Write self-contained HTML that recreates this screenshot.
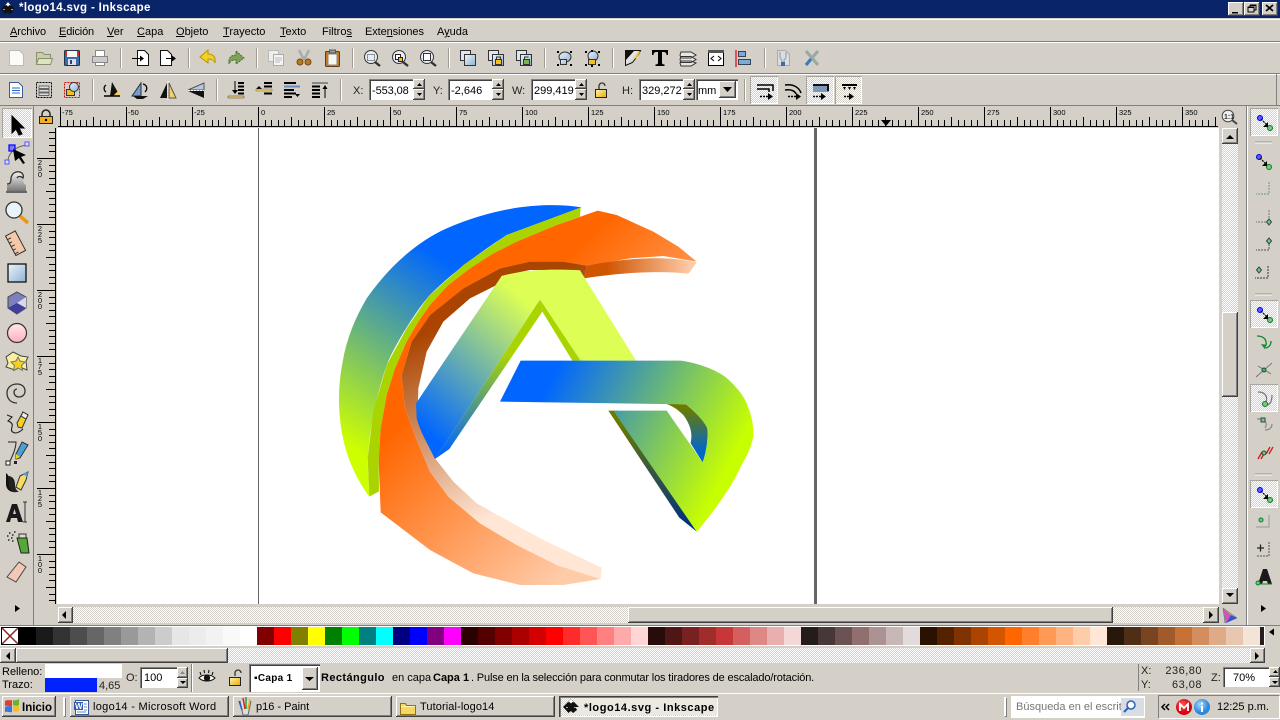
<!DOCTYPE html>
<html><head><meta charset="utf-8"><title>Inkscape</title>
<style>
html,body{margin:0;padding:0;width:1280px;height:720px;overflow:hidden;background:#d4d0c8}
body{position:relative;font:11px "Liberation Sans",sans-serif;color:#000}
.a{position:absolute}
.t{position:absolute;white-space:nowrap;font:11px/13px "Liberation Sans",sans-serif;color:#000}
.b{font-weight:bold}
.btn{position:absolute;background:#d4d0c8;box-shadow:inset -1px -1px #404040,inset 1px 1px #fff,inset -2px -2px #808080}
.sunk{position:absolute;background:#fff;box-shadow:inset 1px 1px #808080,inset 2px 2px #404040,inset -1px -1px #fff;box-sizing:border-box}
.chk{position:absolute;background:repeating-conic-gradient(#d4d0c8 0 25%,#fff 0 50%) 0 0/2px 2px}
.pr{position:absolute;background:repeating-conic-gradient(#d4d0c8 0 25%,#fff 0 50%) 0 0/2px 2px;box-shadow:inset 1px 1px #a8a59e,inset -1px -1px #fff}
.task{position:absolute;top:696px;height:21px;width:159px;background:#d4d0c8;box-shadow:inset -1px -1px #404040,inset 1px 1px #fff,inset -2px -2px #808080}
#pal{position:absolute;left:19px;top:627px;height:18px;display:flex}
#pal i{display:block;width:17px;height:18px;flex:none}
svg{position:absolute;left:0;top:0}
</style></head><body>

<div class="a" style="left:0;top:0;width:1280px;height:18px;background:#0a246a"></div>
<div class="a" style="left:0;top:18px;width:1280px;height:1px;background:#d4d0c8"></div>
<div class="a" style="left:0;top:19px;width:1280px;height:1px;background:#fff"></div>
<div class="a" style="left:0;top:41px;width:1280px;height:1px;background:#808080"></div>
<div class="a" style="left:0;top:42px;width:1280px;height:1px;background:#fff"></div>
<div class="a" style="left:0;top:73px;width:1280px;height:1px;background:#808080"></div>
<div class="a" style="left:0;top:74px;width:1280px;height:1px;background:#fff"></div>
<div class="a" style="left:0;top:105px;width:1280px;height:1px;background:#808080"></div>
<div class="a" style="left:1276px;top:74px;width:1px;height:31px;background:#808080"></div>
<div class="a" style="left:33px;top:106px;width:1px;height:519px;background:#808080"></div>
<div class="a" style="left:1246px;top:106px;width:1px;height:519px;background:#808080"></div>
<div class="a" style="left:1247px;top:106px;width:1px;height:519px;background:#fff"></div>

<div class="a" style="left:57px;top:128px;width:1162px;height:476px;background:#fff"></div>
<div class="a" style="left:258px;top:128px;width:1px;height:476px;background:#666"></div>
<div class="a" style="left:814px;top:128px;width:3px;height:476px;background:#666"></div>

<div class="pr" style="left:2px;top:108px;width:30px;height:30px"></div>
<div class="pr" style="left:1250px;top:108px;width:28px;height:28px"></div>
<div class="pr" style="left:1250px;top:300px;width:28px;height:28px"></div>
<div class="pr" style="left:1250px;top:384px;width:28px;height:28px"></div>
<div class="pr" style="left:1250px;top:480px;width:28px;height:28px"></div>
<div class="pr" style="left:750px;top:76px;width:28px;height:28px"></div>
<div class="pr" style="left:806px;top:76px;width:28px;height:28px"></div>
<div class="pr" style="left:835px;top:76px;width:27px;height:28px"></div>

<div class="chk" style="left:1222px;top:128px;width:16px;height:476px"></div>
<div class="btn" style="left:1222px;top:128px;width:16px;height:16px"></div>
<div class="btn" style="left:1222px;top:312px;width:16px;height:85px"></div>
<div class="btn" style="left:1222px;top:588px;width:16px;height:16px"></div>

<div class="chk" style="left:58px;top:607px;width:1161px;height:16px"></div>
<div class="btn" style="left:58px;top:607px;width:15px;height:16px"></div>
<div class="btn" style="left:628px;top:607px;width:485px;height:16px"></div>
<div class="btn" style="left:1203px;top:607px;width:16px;height:16px"></div>

<div class="a" style="left:0;top:625px;width:1280px;height:1px;background:#808080"></div>
<div class="a" style="left:0;top:626px;width:1265px;height:20px;background:#fff"></div>
<div class="a" style="left:1px;top:627px;width:18px;height:18px;background:#fff"></div>
<div id="pal"><i style="background:#000"></i><i style="background:#1a1a1a"></i><i style="background:#333"></i><i style="background:#4d4d4d"></i><i style="background:#666"></i><i style="background:#808080"></i><i style="background:#999"></i><i style="background:#b3b3b3"></i><i style="background:#ccc"></i><i style="background:#e6e6e6"></i><i style="background:#ececec"></i><i style="background:#f2f2f2"></i><i style="background:#f9f9f9"></i><i style="background:#fff"></i><i style="background:#800000"></i><i style="background:#f00"></i><i style="background:#808000"></i><i style="background:#ff0"></i><i style="background:#008000"></i><i style="background:#0f0"></i><i style="background:#008080"></i><i style="background:#0ff"></i><i style="background:#000080"></i><i style="background:#00f"></i><i style="background:#800080"></i><i style="background:#f0f"></i><i style="background:#2b0000"></i><i style="background:#500"></i><i style="background:#800000"></i><i style="background:#a00"></i><i style="background:#d40000"></i><i style="background:#f00"></i><i style="background:#ff2a2a"></i><i style="background:#f55"></i><i style="background:#ff8080"></i><i style="background:#faa"></i><i style="background:#ffd5d5"></i><i style="background:#280b0b"></i><i style="background:#501616"></i><i style="background:#782121"></i><i style="background:#a02c2c"></i><i style="background:#c83737"></i><i style="background:#d35f5f"></i><i style="background:#de8787"></i><i style="background:#e9afaf"></i><i style="background:#f4d7d7"></i><i style="background:#241c1c"></i><i style="background:#483737"></i><i style="background:#6c5353"></i><i style="background:#916f6f"></i><i style="background:#ac9393"></i><i style="background:#c8b7b7"></i><i style="background:#e3dbdb"></i><i style="background:#2b1100"></i><i style="background:#520"></i><i style="background:#803300"></i><i style="background:#a40"></i><i style="background:#d45500"></i><i style="background:#f60"></i><i style="background:#ff7f2a"></i><i style="background:#f95"></i><i style="background:#ffb380"></i><i style="background:#fca"></i><i style="background:#ffe6d5"></i><i style="background:#28170b"></i><i style="background:#502d16"></i><i style="background:#784421"></i><i style="background:#a05a2c"></i><i style="background:#c87137"></i><i style="background:#d38d5f"></i><i style="background:#deaa87"></i><i style="background:#e9c6af"></i><i style="background:#f4e3d7"></i><i style="background:#241f1c;width:4px"></i></div>

<div class="chk" style="left:0;top:648px;width:1265px;height:15px"></div>
<div class="btn" style="left:0;top:648px;width:16px;height:15px"></div>
<div class="btn" style="left:16px;top:648px;width:212px;height:15px"></div>
<div class="btn" style="left:1250px;top:648px;width:15px;height:15px"></div>

<div class="a" style="left:45px;top:664px;width:77px;height:14px;background:#fff"></div>
<div class="a" style="left:45px;top:678px;width:52px;height:14px;background:#0022ff"></div>
<div class="sunk" style="left:140px;top:667px;width:37px;height:21px"></div>
<div class="btn" style="left:177px;top:667px;width:11px;height:11px"></div>
<div class="btn" style="left:177px;top:678px;width:11px;height:10px"></div>
<div class="a" style="left:191px;top:664px;width:1px;height:28px;background:#808080"></div>
<div class="a" style="left:192px;top:664px;width:1px;height:28px;background:#fff"></div>
<div class="sunk" style="left:249px;top:664px;width:71px;height:28px"></div>
<div class="btn" style="left:302px;top:667px;width:16px;height:23px"></div>
<div class="a" style="left:1138px;top:664px;width:1px;height:27px;background:#808080"></div>
<div class="sunk" style="left:1223px;top:667px;width:46px;height:20px"></div>
<div class="btn" style="left:1269px;top:667px;width:11px;height:10px"></div>
<div class="btn" style="left:1269px;top:677px;width:11px;height:10px"></div>

<div class="sunk" style="left:369px;top:79px;width:45px;height:21px"></div>
<div class="btn" style="left:413px;top:79px;width:12px;height:10px"></div>
<div class="btn" style="left:413px;top:89px;width:12px;height:11px"></div>
<div class="sunk" style="left:448px;top:79px;width:45px;height:21px"></div>
<div class="btn" style="left:492px;top:79px;width:12px;height:10px"></div>
<div class="btn" style="left:492px;top:89px;width:12px;height:11px"></div>
<div class="sunk" style="left:531px;top:79px;width:45px;height:21px"></div>
<div class="btn" style="left:575px;top:79px;width:12px;height:10px"></div>
<div class="btn" style="left:575px;top:89px;width:12px;height:11px"></div>
<div class="sunk" style="left:639px;top:79px;width:45px;height:21px"></div>
<div class="btn" style="left:683px;top:79px;width:12px;height:10px"></div>
<div class="btn" style="left:683px;top:89px;width:12px;height:11px"></div>
<div class="sunk" style="left:696px;top:79px;width:42px;height:21px"></div>
<div class="btn" style="left:719px;top:81px;width:17px;height:17px"></div>

<div class="btn" style="left:1228px;top:2px;width:16px;height:14px"></div>
<div class="btn" style="left:1244px;top:2px;width:16px;height:14px"></div>
<div class="btn" style="left:1262px;top:2px;width:16px;height:14px"></div>

<div class="a" style="left:0;top:692px;width:1280px;height:1px;background:#d4d0c8"></div>
<div class="a" style="left:0;top:693px;width:1280px;height:1px;background:#fff"></div>
<div class="btn" style="left:2px;top:696px;width:54px;height:21px"></div>
<div class="a" style="left:63px;top:697px;width:2px;height:19px;background:#fff;box-shadow:1px 1px #808080"></div>
<div class="task" style="left:70px"></div>
<div class="task" style="left:233px"></div>
<div class="task" style="left:396px"></div>
<div class="task" style="left:559px;background:repeating-conic-gradient(#d4d0c8 0 25%,#fff 0 50%) 0 0/2px 2px;box-shadow:inset 1px 1px #404040,inset 2px 2px #808080,inset -1px -1px #fff"></div>
<div class="a" style="left:575px;top:698px;width:142px;height:17px;background:#ece9e1"></div>
<div class="a" style="left:1004px;top:697px;width:2px;height:19px;background:#fff;box-shadow:1px 1px #808080"></div>
<div class="a" style="left:1011px;top:696px;width:134px;height:22px;background:#fff;box-sizing:border-box"></div>
<div class="a" style="left:1121px;top:698px;width:23px;height:18px;background:#d8dde4"></div>
<div class="a" style="left:1158px;top:695px;width:122px;height:24px;box-sizing:border-box;border:1px solid;border-color:#808080 #fff #fff #808080"></div>

<svg width="1280" height="720" viewBox="0 0 1280 720" xmlns="http://www.w3.org/2000/svg">
<defs>
<pattern id="rt" x="60" y="0" width="66" height="720" patternUnits="userSpaceOnUse"><path shape-rendering="crispEdges" stroke="#000" fill="none" d="M.5 107V126M7.5 120V126M13.5 120V126M20.5 120V126M26.5 120V126M33.5 117V126M40.5 120V126M46.5 120V126M53.5 120V126M59.5 120V126"/></pattern>
<pattern id="rl" x="0" y="158" width="720" height="66" patternUnits="userSpaceOnUse"><path shape-rendering="crispEdges" stroke="#000" fill="none" d="M37 .5H56M49 7.5H56M49 13.5H56M49 20.5H56M49 26.5H56M46 33.5H56M49 40.5H56M49 46.5H56M49 53.5H56M49 59.5H56"/></pattern>
<linearGradient id="gBlueC" gradientUnits="userSpaceOnUse" x1="420" y1="250" x2="70" y2="760"><stop offset="0" stop-color="#06f"/><stop offset="1" stop-color="#ceff00"/></linearGradient>
<linearGradient id="gOr" gradientUnits="userSpaceOnUse" x1="450" y1="450" x2="925" y2="925"><stop offset="0" stop-color="#f60"/><stop offset="1" stop-color="#fca"/></linearGradient>
<linearGradient id="gRib" gradientUnits="userSpaceOnUse" x1="230" y1="440" x2="480" y2="970"><stop offset="0" stop-color="#a40"/><stop offset="1" stop-color="#ffe6d5"/></linearGradient>
<linearGradient id="gArm" gradientUnits="userSpaceOnUse" x1="830" y1="0" x2="1085" y2="0"><stop offset="0" stop-color="#d05500"/><stop offset="1" stop-color="#fca"/></linearGradient>
<linearGradient id="gA" gradientUnits="userSpaceOnUse" x1="630" y1="360" x2="300" y2="720"><stop offset="0" stop-color="#df5"/><stop offset="1" stop-color="#06f"/></linearGradient>
<linearGradient id="gAs" gradientUnits="userSpaceOnUse" x1="0" y1="480" x2="0" y2="770"><stop offset="0" stop-color="#aad400"/><stop offset="1" stop-color="#06f"/></linearGradient>
<linearGradient id="gG" gradientUnits="userSpaceOnUse" x1="660" y1="560" x2="1190" y2="830"><stop offset="0" stop-color="#06f"/><stop offset="1" stop-color="#c8ff00"/></linearGradient>
<linearGradient id="gIn" gradientUnits="userSpaceOnUse" x1="0" y1="640" x2="0" y2="770"><stop offset="0" stop-color="#6b7b00"/><stop offset="1" stop-color="#06c"/></linearGradient>
<linearGradient id="gLo" gradientUnits="userSpaceOnUse" x1="0" y1="680" x2="0" y2="990"><stop offset="0" stop-color="#6b7b00"/><stop offset="1" stop-color="#003080"/></linearGradient>
<linearGradient id="gs" x1="0" y1="0" x2="1" y2="1"><stop offset="0" stop-color="#fff"/><stop offset="1" stop-color="#bbb"/></linearGradient>
<linearGradient id="gblu" x1="0" y1="0" x2="1" y2="1"><stop offset="0" stop-color="#eef4fa"/><stop offset="1" stop-color="#8fb2d6"/></linearGradient>
<linearGradient id="gyl" x1="0" y1="0" x2="1" y2="1"><stop offset="0" stop-color="#fff7b0"/><stop offset="1" stop-color="#e8a800"/></linearGradient>
<linearGradient id="gpk" x1="0" y1="0" x2="0" y2="1"><stop offset="0" stop-color="#ffe8ec"/><stop offset="1" stop-color="#ffb0bc"/></linearGradient>
<linearGradient id="ggr" x1="0" y1="0" x2="0" y2="1"><stop offset="0" stop-color="#eee"/><stop offset="1" stop-color="#777"/></linearGradient>
<radialGradient id="grd" cx=".4" cy=".35"><stop offset="0" stop-color="#ff5a5a"/><stop offset="1" stop-color="#d80010"/></radialGradient>
<radialGradient id="gbl" cx=".4" cy=".35"><stop offset="0" stop-color="#a8d8ff"/><stop offset="1" stop-color="#2a88dd"/></radialGradient>
</defs>

<!-- rulers -->
<rect x="58" y="107" width="1160" height="19" fill="url(#rt)"/>
<rect x="58" y="126" width="1160" height="1" fill="#000"/>
<rect x="37" y="128" width="19" height="476" fill="url(#rl)"/>
<rect x="55" y="128" width="1" height="476" fill="#000"/>
<g font-family="Liberation Sans" font-size="7.500" fill="#000">
<text x="62" y="115">-75</text><text x="128" y="115">-50</text><text x="194" y="115">-25</text><text x="261" y="115">0</text><text x="327" y="115">25</text><text x="393" y="115">50</text><text x="459" y="115">75</text><text x="525" y="115">100</text><text x="591" y="115">125</text><text x="657" y="115">150</text><text x="723" y="115">175</text><text x="789" y="115">200</text><text x="855" y="115">225</text><text x="921" y="115">250</text><text x="987" y="115">275</text><text x="1053" y="115">300</text><text x="1119" y="115">325</text><text x="1185" y="115">350</text>
<g text-anchor="middle">
<text x="40" y="165">2</text><text x="40" y="171">5</text><text x="40" y="177">0</text>
<text x="40" y="231">2</text><text x="40" y="237">2</text><text x="40" y="243">5</text>
<text x="40" y="297">2</text><text x="40" y="303">0</text><text x="40" y="309">0</text>
<text x="40" y="363">1</text><text x="40" y="369">7</text><text x="40" y="375">5</text>
<text x="40" y="429">1</text><text x="40" y="435">5</text><text x="40" y="441">0</text>
<text x="40" y="495">1</text><text x="40" y="501">2</text><text x="40" y="507">5</text>
<text x="40" y="561">1</text><text x="40" y="567">0</text><text x="40" y="573">0</text>
</g></g>
<path d="M881 120h10l-5 6z" fill="#000"/>

<!-- logo -->
<g transform="translate(330 195) scale(.33333)">
<path fill="url(#gBlueC)" d="M755 37C640 20 500 35 350 100C250 145 170 225 110 310C75 370 50 430 38 500C25 570 25 620 30 670C38 760 70 840 118 905L113 800C118 700 140 600 170 510C195 450 250 360 295 305C340 260 400 205 530 120Z"/>
<path fill="#aad400" d="M752 37L530 120L400 210L295 305L230 400L170 510L130 650L113 790L118 905L147 889L146 800L152 700L170 600L195 520L230 440L265 380L300 330L355 270L420 220L490 175L560 140L680 90L750 65Z"/>
<path fill="url(#gOr)" d="M803 47L860 60L970 110L1045 155L1100 200L1000 183L900 190L770 212L700 200L600 200L510 220L400 280L300 360L245 440L215 540L225 640L262 740L300 830L355 905L450 985L560 1050L680 1110L812 1152L700 1170L570 1170L430 1135L300 1065L152 952L146 800L152 700L170 600L195 520L230 440L265 380L300 330L355 270L420 220L490 175L560 140L680 90Z"/>
<path fill="url(#gRib)" d="M770 212L700 200L600 200L510 220L400 280L300 360L245 440L215 540L225 640L262 740L300 830L355 905L450 985L560 1050L680 1110L812 1152L815 1118L640 1035L530 975L440 925L370 860L315 790L262 670L265 580L290 470L340 380L420 310L500 270L515 243L600 225L750 226L763 250Z"/>
<path fill="url(#gArm)" d="M770 212C880 190 1000 180 1100 202L1076 236C980 225 860 235 763 250Z"/>
<path fill="url(#gAs)" d="M630 313L315 792L358 762L637 350Z"/>
<path fill="#aad400" d="M630 313L637 350L727 497H752Z"/>
<path fill="url(#gA)" d="M515 243C590 222 680 222 750 226L918 497L752 497L630 313L315 792C295 750 270 710 260 670L258 625Z"/>
<path fill="url(#gLo)" d="M835 647H860L1100 1010L1048 968Z"/>
<path fill="url(#gIn)" d="M1005 625L1068 628C1095 650 1125 680 1132 700C1135 735 1128 775 1118 802L1082 745C1088 715 1082 690 1060 660C1040 640 1025 632 1005 625Z"/>
<path fill="url(#gG)" d="M572 497H1052C1095 503 1150 520 1185 545C1215 570 1240 600 1250 625C1265 660 1272 695 1270 725C1262 760 1250 785 1240 800C1220 840 1205 870 1190 890C1165 930 1130 975 1100 1010L850 647H1010L1118 802C1128 775 1135 735 1132 700C1125 680 1095 650 1068 628L510 620Z"/>
</g>

<!-- title icon + window buttons -->
<g id="ink"><path d="M8 2L15 9H12L13 12L9 14L8 12L5 14L2 10L1 9Z" fill="#111"/><path d="M8 2L11 5.5L9.5 5L8 6.5L6.5 5L5 5.5Z" fill="#fff"/><path d="M3 9.5h2M11 9.500h2" stroke="#999"/></g>
<path d="M1232 12h6v1.500h-6z" fill="#000"/>
<path d="M1250 5h6v5h-2M1250 5v2M1248 7h6v5h-6z" fill="none" stroke="#000" stroke-width="1"/><path d="M1250 4.500h6.500v1.500h-6.500zM1248 6.500h6v1.500h-6z"/>
<path d="M1266 5l7 6M1273 5l-7 6" stroke="#000" stroke-width="1.700"/>

<!-- toolbar 1 -->
<g stroke-width="1">
<path d="M9.500 50.500h10l4 4v11h-14z" fill="#fbfbf8" stroke="#bbb"/>
<path d="M36.500 52.500h6l2 2h6v10h-14z" fill="#c9cfa4" stroke="#8b9070"/><path d="M38.500 58.500h14l-2 6h-14z" fill="#dde2bf" stroke="#8b9070"/>
<rect x="64.500" y="50.500" width="15" height="15" rx="1" fill="#3b6ea8" stroke="#234"/><rect x="65" y="51" width="14" height="4" fill="#d8262c"/><rect x="67" y="51" width="10" height="6" fill="#f6f6f2"/><rect x="68" y="59" width="8" height="6" fill="#dde"/><rect x="70" y="60" width="2" height="4" fill="#346"/>
<path d="M95.500 50.500h9v6h-9z" fill="#fff" stroke="#888"/><path d="M92.500 56.500h15v6h-15z" fill="#ccc" stroke="#888"/><path d="M95.500 62.500h9v3h-9z" fill="#fff" stroke="#888"/>
<path d="M137.500 50.500h7l4 4v11h-11z" fill="#fff" stroke="#111"/><path d="M132 58.500h10" stroke="#000"/><path d="M140 55.500l4 3-4 3z"/>
<path d="M160.500 50.500h7l4 4v11h-11z" fill="#fff" stroke="#111"/><path d="M166 58.500h8" stroke="#000"/><path d="M172 55.500l4 3-4 3z"/>
<path d="M208 50l-8 7 8 6v-4c4 0 6 1 7 4 1-6-2-9-7-9z" fill="#f4d020" stroke="#b8960a"/>
<path d="M236 51l8 7-8 6v-4c-4 0-6 1-7 4-1-6 2-9 7-9z" fill="#7da25a" stroke="#4d6b35" stroke-dasharray="2 1"/>
<path d="M268.500 50.500h10v11h-10z" fill="#eee" stroke="#bbb"/><path d="M273.500 54.500h10v11h-10z" fill="#f5f5f5" stroke="#aaa"/><path d="M275 58h7M275 60h7M275 62h5" stroke="#bbb"/>
<path d="M299 50l5 10M309 50l-5 10" stroke="#aaa" stroke-width="2.500"/><circle cx="300" cy="62" r="3" fill="#b87a1e" stroke="#7a4a10"/><circle cx="308" cy="62" r="3" fill="#b87a1e" stroke="#7a4a10"/>
<rect x="325.500" y="51.500" width="14" height="15" rx="1" fill="#c07a2a" stroke="#6a3a10"/><rect x="328" y="54" width="9" height="11" fill="#f7f7f2" stroke="#888"/><rect x="329.500" y="50" width="6" height="3" fill="#999" stroke="#555"/>
<g fill="#fff" stroke="#333"><circle cx="371" cy="57" r="6.500" fill="#e7eef5"/><path d="M375 62l5 4" stroke-width="2.400"/><circle cx="399" cy="57" r="6.500" fill="#e7eef5"/><path d="M403 62l5 4" stroke-width="2.400"/><circle cx="427" cy="57" r="6.500" fill="#e7eef5"/><path d="M431 62l5 4" stroke-width="2.400"/></g>
<rect x="367.500" y="54.500" width="7" height="6" fill="none" stroke="#333" stroke-dasharray="1 1"/><rect x="395.500" y="54.500" width="5" height="5" fill="#fff" stroke="#222"/><rect x="398.500" y="57.500" width="4" height="4" fill="#f4c020" stroke="#222"/><rect x="423.500" y="53.500" width="7" height="7" fill="#fff" stroke="#333"/>
</g>
<g stroke="#333">
<rect x="460.500" y="50.500" width="10" height="10" fill="#dde7f1"/><rect x="464.500" y="54.500" width="11" height="11" fill="url(#gblu)"/>
<rect x="488.500" y="50.500" width="10" height="10" fill="#dde7f1"/><rect x="492.500" y="54.500" width="11" height="11" fill="url(#gblu)"/><rect x="495.500" y="59.500" width="6" height="5" fill="#f4c020"/><path d="M496.500 59v-2h4v2" fill="none"/>
<rect x="516.500" y="50.500" width="10" height="10" fill="#dde7f1"/><rect x="520.500" y="54.500" width="11" height="11" fill="url(#gblu)"/><rect x="523.500" y="59.500" width="6" height="5" fill="#7ab648"/><path d="M524.500 59v-2h4" fill="none"/>
<ellipse cx="565" cy="57" rx="6" ry="5" fill="url(#gblu)"/><rect x="560.500" y="59.500" width="6" height="5" fill="url(#gblu)"/>
<ellipse cx="593" cy="56" rx="5" ry="5" fill="url(#gblu)"/><rect x="588.500" y="59.500" width="7" height="5" fill="#f4c020"/>
</g>
<path d="M557 51h2v2h-2zM570 51h2v2h-2zM557 64h2v2h-2zM570 64h2v2h-2zM585 51h2v2h-2zM598 51h2v2h-2zM585 64h2v2h-2zM598 64h2v2h-2zM591 50h2v2h-2zM591 65h2v2h-2z"/>
<path d="M625.500 50.500h15l-2 4-6 8-7 3z" fill="url(#gs)" stroke="#111"/><path d="M625 66V51h9l-9 10z" fill="#111"/><path d="M634 59l5-8 1 1-3 6z" fill="#f4c020"/>
<path d="M652 50h16v5h-1.500c0-2-1-3-3-3h-1.500v11c0 1 1 1.500 2.500 1.500V66h-9v-1.500c1.500 0 2.500-.5 2.500-1.500V52h-1.500c-2 0-3 1-3 3H652z" fill="#000"/>
<path d="M681 52h10l5 3-5 3h-10l-1-3z M681 56.500h10l5 3-5 3h-10l-1-3z M681 61h10l5 2-5 3h-10l-1-3z" fill="#e8e8e2" stroke="#333"/>
<rect x="708.500" y="50.500" width="15" height="15" fill="#fff" stroke="#000"/><rect x="708" y="50" width="16" height="3" fill="#555"/><path d="M714 56l-3 2.500 3 2.500M718 56l3 2.500-3 2.500" fill="none" stroke="#000"/>
<path d="M736 50v17" stroke="#e01010" stroke-width="1.300"/><rect x="738.500" y="51.500" width="7" height="5" fill="#7eaad8" stroke="#345"/><rect x="738.500" y="59.500" width="12" height="5" fill="#7eaad8" stroke="#345"/>
<path d="M777.500 50.500h8l4 4v11h-12z" fill="#ddd" stroke="#aaa"/><path d="M780 52v5c0 2 2 2 2 4v3h2v-3c0-2 2-2 2-4v-5" fill="none" stroke="#8aa" stroke-width="1.200"/><rect x="781" y="62" width="4" height="4" fill="#3a6ab0"/>
<path d="M806 51l12 14M818 51l-12 14" stroke="#9aa8a4" stroke-width="3"/><path d="M806 65l5-6" stroke="#3a78c0" stroke-width="3"/>
<!-- separators -->
<path d="M120.500 48v20M188.500 48v20M256.500 48v20M352.500 48v20M448.500 48v20M544.500 48v20M612.500 48v20M764.500 48v20M92.500 79v22M216.500 79v22M340.500 79v22M744.500 79v22" stroke="#a09c94"/>
<path d="M121.500 48v20M189.500 48v20M257.500 48v20M353.500 48v20M449.500 48v20M545.500 48v20M613.500 48v20M765.500 48v20M93.500 79v22M217.500 79v22M341.500 79v22M745.500 79v22" stroke="#fff"/>

<!-- toolbar 2 -->
<path d="M9.500 82.500h9l4 4v11h-13z" fill="#fff" stroke="#3a5a9a"/><path d="M12 88h8M12 90.500h8M12 93h8" stroke="#2a62c8"/>
<rect x="36.500" y="82.500" width="15" height="15" fill="none" stroke="#000" stroke-dasharray="2 1"/><path d="M39 86h10v2.500H39zM39 89.500h10V92H39zM39 93h10v2.500H39z" fill="#ddd" stroke="#444" stroke-width=".7"/>
<rect x="64.500" y="82.500" width="15" height="15" fill="none" stroke="#d01010" stroke-dasharray="2 1"/><rect x="66.500" y="89.500" width="8" height="6" fill="#f4c020" stroke="#333"/><circle cx="74" cy="87" r="4.500" fill="url(#gblu)" stroke="#333"/>
<path d="M110 96L112 82l8 14z" fill="#111"/><path d="M113 96l7-7v7z" fill="#f4d060"/><path d="M104 96h16" stroke="#000" stroke-width="1.500"/><path d="M106 85c-3 2-2 6 0 7" fill="none" stroke="#000" stroke-width="1.300"/>
<path d="M132 96l9-13v13z" fill="#7a9ac8" stroke="#234"/><path d="M133 96h15l-5 3h-6z" fill="#111"/><path d="M143 84c4 1 5 5 2 8" fill="none" stroke="#000" stroke-width="1.300"/>
<path d="M167 83l-7 15h7z" fill="#111"/><path d="M169 83l7 15h-7z" fill="#f4d060" stroke="#555"/><path d="M168 81v19" stroke="#fff" stroke-dasharray="2 1"/>
<path d="M204 83l-16 7h16z" fill="#b8c8e0" stroke="#555"/><path d="M204 91l-16 0 16 7z" fill="#111"/><path d="M188 90.500h16" stroke="#fff" stroke-dasharray="2 1"/>
<path d="M235 81v12" stroke="#000"/><path d="M232 90h6l-3 4z"/><rect x="228" y="96" width="16" height="2" fill="#f4d060" stroke="#555" stroke-width=".6"/>
<path d="M238 82h6v2h-6zM238 85.500h6v2h-6zM238 89h6v2h-6zM238 92.500h6v2h-6z"/>
<path d="M256 89h6l-3-3zM264 82h8v2h-8zM264 85.500h8v2h-8zM264 92.500h8v2h-8z"/><rect x="256" y="89" width="16" height="2" fill="#f4d060" stroke="#555" stroke-width=".4"/>
<path d="M284 82h12v2h-12zM284 85.500h16v2h-16zM284 89h10v2h-10zM284 92.500h12v2h-12zM284 96h8v2h-8z"/><path d="M284 85.500h16v2h-16z" fill="#6a8ac0"/><path d="M295 94h5l-2.500 3z"/>
<rect x="312" y="82" width="16" height="2" fill="#888"/><path d="M312 85.500h8v2h-8zM312 89h8v2h-8zM312 92.500h8v2h-8zM312 96h8v2h-8z"/><path d="M325 87v11" stroke="#000"/><path d="M322.500 89l2.500-4 2.500 4z"/>
<path d="M600 88v-3a3 3 0 0 1 6 0" fill="none" stroke="#333" stroke-width="1.300" transform="translate(-1 1)"/><rect x="595.500" y="89.500" width="11" height="8" fill="url(#gyl)" stroke="#222"/>
<!-- transform affect icons -->
<g stroke="#000" stroke-width="1.500" fill="none"><path d="M757 85h16v6M757 89h12v3"/><path d="M760 96.500h9" stroke-dasharray="2 1"/>
<path d="M785 85c8-1 14 2 16 8M785 90c6-1 10 1 11 4"/><path d="M788 96.500h9" stroke-dasharray="2 1"/>
<path d="M813 96.500h9" stroke-dasharray="2 1"/>
<path d="M842 85h14" /><path d="M844 96.500h8" stroke-dasharray="2 1"/></g>
<path d="M768 93l5 3.500-5 3.500zM796 93l5 3.500-5 3.500zM821 93l5 3.500-5 3.500zM849 93l5 3.500-5 3.500z"/>
<rect x="813" y="84" width="16" height="8" fill="#7d97b8"/><path d="M813 84h16v7h-2v-5h-14z" fill="#111"/><path d="M842 84h15v2h-15z"/><path d="M843 87h3l-1.500 3zM848 87h3l-1.500 3zM853 87h3l-1.500 3z"/>
<!-- spinner arrows -->
<g fill="#000"><path d="M417 86l2.500-3 2.500 3zM417 93l2.500 3 2.500-3zM496 86l2.500-3 2.500 3zM496 93l2.500 3 2.500-3zM579 86l2.500-3 2.500 3zM579 93l2.500 3 2.500-3zM687 86l2.500-3 2.500 3zM687 93l2.500 3 2.500-3z"/><path d="M723 87h9l-4.500 5z"/></g>

<!-- left toolbar -->
<path d="M12 116v17l4-4 3 6 3-1-3-6h5z" fill="#000" stroke="#000"/>
<path d="M8 160c1-8 9-14 19-15" fill="none" stroke="#666"/><rect x="9" y="145" width="6" height="6" fill="#7a7aff" stroke="#00f" stroke-width="1.200"/><rect x="25" y="142" width="4" height="4" fill="#dde" stroke="#55f"/><rect x="5" y="160" width="4" height="4" fill="#dde" stroke="#55f"/><path d="M13 149l13 6-5 2 4 6-2 1-4-6-4 3z" fill="#000"/>
<path d="M7 185v6h19v-6c-3-1-3-5-3-7 0-4-3-6-7-5-4 1-6 4-6 8 0 2-1 4-3 4z" fill="url(#ggr)"/><path d="M7 184c4 0 4-3 4-6 1-5 5-7 9-6 3 1 4 4 3 6-2-2-5-2-6 0" fill="none" stroke="#333" stroke-width="1.300"/><rect x="6" y="191" width="21" height="2" fill="#666"/>
<circle cx="14" cy="210" r="8" fill="#eaf2fa" stroke="#333" stroke-width="1.300"/><path d="M20 216l8 7" stroke="#e89a10" stroke-width="3.500"/>
<g transform="rotate(-28 16 243)"><rect x="10" y="232" width="11" height="22" fill="#f4c8a8" stroke="#333"/><path d="M10 236h4M10 240h3M10 244h4M10 248h3M10 252h4" stroke="#333"/></g>
<rect x="8" y="264" width="18" height="18" fill="url(#gblu)" stroke="#111" stroke-width="1.300"/>
<path d="M17 292l9 5v11l-9 6-9-6v-11z" fill="#7c80bc" stroke="#444"/><path d="M17 303l9-6v11l-9 6z" fill="#d6d8ee"/><path d="M17 303l-9 5 9 6 9-6z" fill="#3f4198"/>
<circle cx="17" cy="333" r="9.500" fill="url(#gpk)" stroke="#333" stroke-width="1.200"/>
<path d="M13 352l-7 5 2 6-2 4 9 3 5-3 7 3-1-9 2-4-7-1z" fill="#f8f0a0" stroke="#444"/><path d="M18 357l2 4 5 1-3.500 3.500 1 5-4.500-2.500-4.500 2.500 1-5-3.500-3.500 5-1z" fill="#f4d020" stroke="#777"/>
<path d="M17 403c-7 0-10-5-10-10 0-6 5-9 10-9 5 0 8 3 8 7 0 4-3 6-6 6-3 0-5-2-5-5 0-2 2-3 3-3" fill="none" stroke="#333" stroke-width="1.300"/>
<path d="M7 415l5 2-4 4c3 1 5 3 4 6-1 3-1 5 3 6 3 0 6-2 8-4" fill="none" stroke="#222" stroke-width="1.100"/><path d="M23 412l5 3-6 13-4-1-1-4z" fill="#f4d020" stroke="#333"/><path d="M23 412l5 3-2 4-5-3z" fill="#eee" stroke="#333"/>
<path d="M8 442h8c0 5-3 13-6 19" fill="none" stroke="#222"/><rect x="6" y="461" width="4" height="4" fill="#fff" stroke="#222"/><rect x="14" y="461" width="3" height="3" fill="#222"/><path d="M22 442l6 3-8 13-4 1v-5z" fill="#4aa0d8" stroke="#333"/><path d="M16 454l4 3-4 2z" fill="#f4d020"/>
<path d="M6 473c4 3 3 7 3 10 0 6 3 8 8 9-6 1-11-2-11-8 0-4 0-7 0-11z" fill="#111"/><path d="M8 476c5 0 7 4 7 8s1 6 4 8h-6c-3-2-4-5-4-8z" fill="#222"/><path d="M20 476l8-4-2 8-5 10-5-3z" fill="#f6dc60" stroke="#333"/><path d="M23 474l5-2-1 5z" fill="#4aa0d8"/>
<path d="M6 522l6-18h5l6 18h-5l-1-4h-6l-1 4z M13 514h3l-1.500-5z" fill="#1a1a1a" fill-rule="evenodd"/><path d="M25 502v20M23 502h4M23 522h4" stroke="#333" fill="none"/>
<path d="M7 536h1.500M9 533h1.500M12 535h1.500M8 540h1.500M11 538h1.500M14 532h1.500M12 541h1.500" stroke="#222" stroke-width="1.500"/><rect x="19" y="534" width="7" height="4" fill="#d8d8d0" stroke="#333"/><path d="M17 538h10l2 15H21z" fill="#55a838" stroke="#222"/>
<path d="M7 577l12-15 7 5-10 15-9-5z" fill="#f4c8b4" stroke="#444"/>
<path d="M15 605l5 3.500-5 3.500z"/>

<!-- scrollbar arrows -->
<path d="M1226 139l4-4 4 4z M1226 593h8l-4 4z M62 615l4-4v8z M1209 611l4 4-4 4z M6 656l4-4v8z M1255 652l4 4-4 4z M1269 632l5-3.500v7z"/>
<!-- 1:1 zoom -->
<circle cx="1228" cy="116" r="5.800" fill="#eee" stroke="#444"/><path d="M1232 120l5 4" stroke="#444" stroke-width="2"/>
<text x="1224" y="119" font-size="7" font-family="Liberation Sans" font-weight="bold" fill="#333">1:1</text>
<!-- color wheel -->
<path d="M1223 608l14 10-12 5z" fill="#8ad070" stroke="#555" stroke-width=".5"/><path d="M1223 608l3 15 5-8z" fill="#d050c8"/><path d="M1226 623l11-5-6-3z" fill="#3a50d8"/><path d="M1223 608l8 7 2 1z" fill="#e0c040"/>

<!-- right toolbar -->
<g id="snap"><circle cx="1260" cy="118" r="2.500" fill="#5a5aff" stroke="#00d"/><circle cx="1270" cy="128" r="2.500" fill="#7ac87a" stroke="#0a7a2a"/><path d="M1261 119l7 7" stroke="#000" stroke-width="1.200" stroke-dasharray="2 1"/><path d="M1268 122v5h-5z"/></g>
<path d="M1255 142h17" stroke="#999"/><path d="M1255 143h17" stroke="#fff"/>
<circle cx="1259" cy="157" r="2.500" fill="#5a5aff" stroke="#00d"/><circle cx="1269" cy="167" r="2.500" fill="#7ac87a" stroke="#0a7a2a"/><path d="M1260 158l7 7" stroke="#000" stroke-width="1.200" stroke-dasharray="2 1"/><path d="M1267 161v5h-5z"/>
<path d="M1269 182v12h-13" fill="none" stroke="#6a9a7a" stroke-dasharray="2 1"/>
<path d="M1269 210v12h-13" fill="none" stroke="#777" stroke-dasharray="2 1"/><path d="M1269 219l2.500 3-2.500 3-2.500-3z" fill="#7ac87a" stroke="#345"/>
<path d="M1269 238v12h-13" fill="none" stroke="#555" stroke-dasharray="2 1"/><path d="M1269 238l2.500 3-2.500 3-2.500-3z" fill="#7ac87a" stroke="#345"/>
<path d="M1268 266v12h-13" fill="none" stroke="#333" stroke-dasharray="2 1"/><path d="M1259 267l2.500 3-2.500 3-2.500-3z" fill="#7ac87a" stroke="#345"/>
<path d="M1255 294h17" stroke="#999"/><path d="M1255 295h17" stroke="#fff"/>
<circle cx="1260" cy="310" r="2.500" fill="#5a5aff" stroke="#00d"/><circle cx="1270" cy="320" r="2.500" fill="#7ac87a" stroke="#0a7a2a"/><path d="M1261 311l7 7" stroke="#000" stroke-width="1.200" stroke-dasharray="2 1"/><path d="M1268 314v5h-5z"/>
<path d="M1257 336c6 0 10 3 9 9M1271 341c0 5-3 7-7 7" fill="none" stroke="#0a8a2a" stroke-width="1.300"/><path d="M1261 344l3 4 3-3" fill="#0a8a2a"/>
<path d="M1256 377l16-14M1258 366l13 8" stroke="#777"/><circle cx="1264" cy="370" r="2" fill="#5aaa6a" stroke="#0a5a2a"/>
<path d="M1258 392c7 0 10 4 8 10M1272 395c0 7-2 10-6 10" fill="none" stroke="#777" stroke-width="1.200"/><circle cx="1265" cy="404" r="2.500" fill="#7ac87a" stroke="#0a7a2a"/>
<path d="M1257 419h6M1262 420c5 1 5 5 3 8M1272 424c0 4-3 6-7 6" fill="none" stroke="#888" stroke-width="1.200"/><rect x="1261" y="418" width="4" height="4" fill="#7ac87a" stroke="#345"/>
<path d="M1258 459l4-7M1261 459l4-7M1266 454l4-7M1269 454l4-7" stroke="#d01818" stroke-width="1.300"/><circle cx="1264" cy="453" r="2" fill="#7ac87a" stroke="#0a5a2a"/>
<path d="M1255 474h17" stroke="#999"/><path d="M1255 475h17" stroke="#fff"/>
<circle cx="1260" cy="490" r="2.500" fill="#5a5aff" stroke="#00d"/><circle cx="1270" cy="500" r="2.500" fill="#7ac87a" stroke="#0a7a2a"/><path d="M1261 491l7 7" stroke="#000" stroke-width="1.200" stroke-dasharray="2 1"/><path d="M1268 494v5h-5z"/>
<path d="M1269 515v12h-13" fill="none" stroke="#999"/><circle cx="1261" cy="520" r="2" fill="#7ac87a" stroke="#0a7a2a"/>
<path d="M1269 542v14h-13" fill="none" stroke="#555" stroke-dasharray="2 1"/><path d="M1257 548h7M1260.500 544.500v7" stroke="#222" stroke-width="1.300"/>
<path d="M1258 584l5-15h4l5 15h-4l-1-3h-4l-1 3z" fill="#1a1a1a"/><path d="M1258 584h14" stroke="#0a8a2a"/><circle cx="1258" cy="583" r="2" fill="#7ac87a" stroke="#0a7a2a"/>
<path d="M1261 605l5 3.500-5 3.500z"/>

<!-- palette X -->
<path d="M2 628l16 16M18 628l-16 16" stroke="#8a2a2a" stroke-width="1.500"/><rect x="1.500" y="627.500" width="17" height="17" fill="none" stroke="#000"/>

<!-- status icons -->
<path d="M180 674l2.500-3 2.500 3z" fill="#888"/><path d="M180 681h6l-3 3z"/>
<path d="M199 678c3-4 12-4 16 0-4 4-12 4-16 0z" fill="#fff" stroke="#111"/><circle cx="207" cy="678" r="3.200" fill="#111"/><path d="M200 672l1 3M204 670l.5 3M209 670l-.5 3M213 672l-1 3" stroke="#111" stroke-width="1.100"/>
<path d="M235 676v-3a3 3 0 0 1 6 0" fill="none" stroke="#333" stroke-width="1.300"/><rect x="229.500" y="677.500" width="11" height="8" fill="url(#gyl)" stroke="#222"/>
<path d="M305 677h9l-4.500 4z"/>
<path d="M1273 673l2.500-3 2.500 3zM1272 681h6l-3 3z"/>

<!-- lock on ruler -->
<path d="M42 117v-3a4 4 0 0 1 8 0v3" fill="none" stroke="#222" stroke-width="1.500"/><rect x="39.500" y="116.500" width="13" height="7" fill="#f4b020" stroke="#222"/><circle cx="46" cy="120" r="1.200"/>

<!-- taskbar icons -->
<path d="M5 701c3-2 5 0 7-1v6c-2 1-4-1-7 0z" fill="#e0402a"/><path d="M13 700c2 1 4 0 6-1v6c-2 1-4 1-6 0z" fill="#6ab42a"/><path d="M5 707c3-2 5 0 7-1v6c-2 1-4-1-7 0z" fill="#3a78d8"/><path d="M13 706c2 1 4 0 6-1v6c-2 1-4 1-6 0z" fill="#f4c020"/>
<rect x="75.500" y="700.500" width="13" height="14" fill="#fff" stroke="#345a9a"/><rect x="74" y="702" width="9" height="8" fill="#2a5ab0"/><path d="M84 704h3M84 707h3M84 710h3M77 712h9" stroke="#6a8ac0"/><text x="75" y="709" font-size="8" font-weight="bold" fill="#fff" font-family="Liberation Sans">W</text>
<path d="M240 701l3 14h5l3-14" fill="#ddd" stroke="#666"/><path d="M243 698l2 11" stroke="#d82020" stroke-width="1.500"/><path d="M246 697l0 12" stroke="#30a030" stroke-width="1.500"/><path d="M250 699l-2 10" stroke="#e8b020" stroke-width="1.500"/><path d="M239 701l3 9" stroke="#2060d0" stroke-width="1.500"/>
<path d="M400.500 703.500h5l1 2h9v9h-15z" fill="#f6d860" stroke="#907020"/><path d="M401 706.500h14" stroke="#fff4b0"/>
<g transform="translate(563 698)"><path d="M8 1L16 9H12.500L14 12L10 15L8 13L5.500 15L2 11L0 9Z" fill="#111"/><path d="M8 1L11 4.500L9.500 4L8 5.500L6.500 4L5 4.500Z" fill="#fff"/><path d="M3 9.500h2M11 9.500h2" stroke="#aaa"/></g>
<circle cx="1131" cy="705" r="4" fill="#fff" stroke="#2a62b8" stroke-width="1.500"/><path d="M1128 708l-4 4" stroke="#2a62b8" stroke-width="2"/>
<path d="M1165 704l-3 3 3 3M1169 704l-3 3 3 3" fill="none" stroke="#000" stroke-width="1.500"/>
<circle cx="1184" cy="707" r="8" fill="url(#grd)"/><path d="M1180 711v-7l4 4 4-4v7" fill="none" stroke="#fff" stroke-width="1.800"/>
<circle cx="1202" cy="707" r="8" fill="url(#gbl)"/><rect x="1201" y="706" width="2" height="6" fill="#fff"/><rect x="1201" y="702.500" width="2" height="2" fill="#fff"/>
</svg>

<span class="t b" style="left:19px;top:2px;color:#fff;font-size:11.500px;letter-spacing:.35px">*logo14.svg - Inkscape</span>

<span class="t" style="left:10px;top:26px;letter-spacing:-.1px"><u>A</u>rchivo</span>
<span class="t" style="left:59px;top:26px;letter-spacing:-.15px"><u>E</u>dición</span>
<span class="t" style="left:107px;top:26px"><u>V</u>er</span>
<span class="t" style="left:137px;top:26px"><u>C</u>apa</span>
<span class="t" style="left:176px;top:26px"><u>O</u>bjeto</span>
<span class="t" style="left:223px;top:26px"><u>T</u>rayecto</span>
<span class="t" style="left:280px;top:26px"><u>T</u>exto</span>
<span class="t" style="left:322px;top:26px">Filtro<u>s</u></span>
<span class="t" style="left:365px;top:26px;letter-spacing:-.1px">Exte<u>n</u>siones</span>
<span class="t" style="left:437px;top:26px">A<u>y</u>uda</span>

<span class="t" style="left:353px;top:85px;color:#222">X:</span>
<span class="t" style="left:372px;top:85px;letter-spacing:-.1px">-553,08</span>
<span class="t" style="left:433px;top:85px;color:#222">Y:</span>
<span class="t" style="left:451px;top:85px">-2,646</span>
<span class="t" style="left:512px;top:85px;color:#222">W:</span>
<span class="a" style="left:533px;top:81px;width:41px;height:17px;overflow:hidden"><span class="t" style="left:1px;top:4px">299,419</span></span>
<span class="t" style="left:622px;top:85px;color:#222">H:</span>
<span class="a" style="left:641px;top:81px;width:41px;height:17px;overflow:hidden"><span class="t" style="left:1px;top:4px">329,272</span></span>
<span class="t" style="left:698px;top:85px">mm</span>

<span class="t" style="left:2px;top:666px">Relleno:</span>
<span class="t" style="left:2px;top:679px">Trazo:</span>
<span class="t" style="left:99px;top:680px;color:#222">4,65</span>
<span class="t" style="left:126px;top:672px;color:#222">O:</span>
<span class="t" style="left:144px;top:672px">100</span>
<span class="t b" style="left:254px;top:672px;font-size:10px;letter-spacing:.3px">▪Capa 1</span>
<span class="t b" style="left:321px;top:672px;letter-spacing:.4px">Rectángulo</span>
<span class="t" style="left:392px;top:672px">en capa</span>
<span class="t b" style="left:433px;top:672px">Capa 1</span>
<span class="t" style="left:471px;top:672px;letter-spacing:-.15px">. Pulse en la selección para conmutar los tiradores de escalado/rotación.</span>
<span class="t" style="left:1141px;top:665px;color:#222">X:</span>
<span class="t" style="left:1141px;top:679px;color:#222">Y:</span>
<span class="t" style="left:1160px;top:665px;width:42px;text-align:right;letter-spacing:.5px;color:#222">236,80</span>
<span class="t" style="left:1160px;top:679px;width:42px;text-align:right;letter-spacing:.5px;color:#222">63,08</span>
<span class="t" style="left:1211px;top:672px;color:#222">Z:</span>
<span class="t" style="left:1233px;top:672px">70%</span>

<span class="t b" style="left:22px;top:702px;font-size:11.500px">Inicio</span>
<span class="t" style="left:93px;top:701px;letter-spacing:.3px">logo14 - Microsoft Word</span>
<span class="t" style="left:256px;top:701px">p16 - Paint</span>
<span class="t" style="left:420px;top:701px;letter-spacing:.1px">Tutorial-logo14</span>
<span class="t b" style="left:584px;top:702px;letter-spacing:.55px">*logo14.svg - Inkscape</span>
<span class="a" style="left:1016px;top:701px;width:105px;height:14px;overflow:hidden"><span class="t" style="left:0;top:0;color:#777">Búsqueda en el escritorio</span></span>
<span class="t" style="left:1217px;top:701px">12:25 p.m.</span>
</body></html>
